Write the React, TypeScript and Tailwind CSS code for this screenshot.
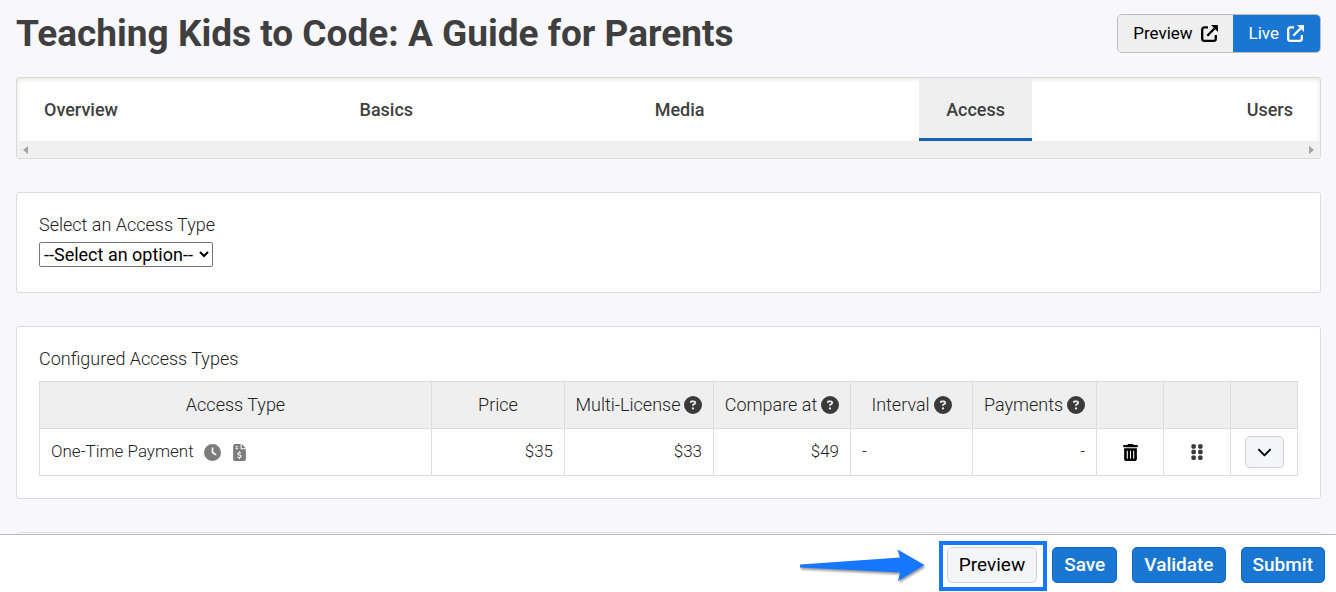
import type { ReactNode } from 'react';
import {
  FaChevronDown,
  FaCircleQuestion,
  FaClock,
  FaFileInvoiceDollar,
  FaGripVertical,
  FaTrashCan,
} from 'react-icons/fa6';

const tabs = ['Overview', 'Basics', 'Media', 'Access', 'Users'];

interface Column {
  label: string;
  width: string;
  help?: boolean;
}

const columns: Column[] = [
  { label: 'Access Type', width: '' },
  { label: 'Price', width: 'w-[133px]' },
  { label: 'Multi-License', width: 'w-[149px]', help: true },
  { label: 'Compare at', width: 'w-[137px]', help: true },
  { label: 'Interval', width: 'w-[122px]', help: true },
  { label: 'Payments', width: 'w-[124px]', help: true },
  { label: '', width: 'w-[67px]' },
  { label: '', width: 'w-[67px]' },
  { label: '', width: 'w-[67px]' },
];

function ExternalIcon() {
  return (
    <svg className="size-[17px]" viewBox="0 0 17 17" fill="none" stroke="currentColor" strokeWidth={2.3}>
      <path d="M7 2.4H3.2a2 2 0 0 0-2 2v9.400a2 2 0 0 0 2 2h9.600a2 2 0 0 0 2-2V10" />
      <path d="M6.300 10.700 13.500 3.500" />
      <path d="M10 0h6.300q.7 0 .7.7V7z" fill="currentColor" stroke="none" />
    </svg>
  );
}

function Card({ children }: { children?: ReactNode }) {
  return (
    <section className="mt-[33px] rounded-[3px] border border-[#dcdcdc] bg-white px-[22px] pt-[21px]">
      {children}
    </section>
  );
}

function TabBar() {
  return (
    <nav className="mt-6 rounded-[3px] border border-[#d9d9d9] bg-white shadow-[inset_0_1px_5px_#e4e4da]">
      <div className="flex h-[63px] justify-between">
        {tabs.map((tab) => (
          <a
            key={tab}
            href={`#${tab.toLowerCase()}`}
            className={
              tab === 'Access'
                ? 'flex items-center border-b-3 border-[#1565c0] bg-[#efefef] px-[27px] pt-[3px] text-lg font-medium'
                : 'flex items-center px-[27px] text-lg font-medium'
            }
          >
            {tab}
          </a>
        ))}
      </div>
      <div className="flex h-[17px] items-center justify-between bg-[#f0f0f0] px-1.5 text-[#a3a3a3]">
        <svg className="h-2 w-[5px]" viewBox="0 0 5 8" fill="currentColor">
          <path d="M5 0v8L0 4z" />
        </svg>
        <svg className="h-2 w-[5px]" viewBox="0 0 5 8" fill="currentColor">
          <path d="M0 0v8l5-4z" />
        </svg>
      </div>
    </nav>
  );
}

function AccessTable() {
  return (
    <table className="mt-[11px] mb-[22px] w-full table-fixed border-collapse">
      <thead>
        <tr className="h-[47px] bg-[#efefef]">
          {columns.map((col, i) => (
            <th key={i} className={`${col.width} border border-[#dcdcdc] p-0 text-lg font-light text-[#222]`}>
              <span className="inline-flex items-center gap-1">
                {col.label}
                {col.help && <FaCircleQuestion className="size-[18px] text-[#3a3a3a]" />}
              </span>
            </th>
          ))}
        </tr>
      </thead>
      <tbody>
        <tr className="h-[47px] text-[17px] font-light text-[#222]">
          <td className="border border-[#dcdcdc] px-[11px]">
            <div className="flex items-center">
              One-Time Payment
              <FaClock className="ml-2.5 size-[17px] text-[#7c7c7c]" />
              <FaFileInvoiceDollar className="ml-2.5 size-[17px] text-[#7c7c7c]" />
            </div>
          </td>
          <td className="border border-[#dcdcdc] px-[11px] text-right">$35</td>
          <td className="border border-[#dcdcdc] px-[11px] text-right">$33</td>
          <td className="border border-[#dcdcdc] px-[11px] text-right">$49</td>
          <td className="border border-[#dcdcdc] px-[11px]">-</td>
          <td className="border border-[#dcdcdc] px-[11px] text-right">-</td>
          <td className="border border-[#dcdcdc] p-0">
            <button aria-label="Delete" className="mx-auto block text-black">
              <FaTrashCan className="size-[17px]" />
            </button>
          </td>
          <td className="border border-[#dcdcdc] p-0">
            <button aria-label="Reorder" className="mx-auto block text-[#3a3a3a]">
              <FaGripVertical className="size-[18px]" />
            </button>
          </td>
          <td className="border border-[#dcdcdc] p-0">
            <button
              aria-label="Expand"
              className="mx-auto flex h-8 w-[39px] items-center justify-center rounded-[5px] border border-[#cfd1d5] bg-[#f4f5f8] pb-0.5 text-black shadow-xs"
            >
              <FaChevronDown className="size-[15px]" />
            </button>
          </td>
        </tr>
      </tbody>
    </table>
  );
}

function Footer() {
  return (
    <footer className="flex h-[58px] shrink-0 items-center justify-end gap-[15px] border-t border-[#b8b8b8] bg-white pt-0.5 pr-[11px] text-[19px]">
      <div className="relative">
        <button className="h-9 rounded-[5px] border border-[#cfd1d5] bg-[#f4f5f8] px-[11px] pt-0.5 text-black">
          Preview
        </button>
        <div className="pointer-events-none absolute -top-1.5 -right-2.5 -bottom-2 -left-2 border-4 border-[#1777ff]" />
        <svg
          className="pointer-events-none absolute top-0 right-full mr-[22px] h-9 w-[126px] drop-shadow-[1px_2px_1px_rgba(0,0,0,0.4)]"
          viewBox="0 0 126 36"
          fill="#1777ff"
        >
          <path d="M1 17.500 101 10.500 98.500 2.500 125.500 18 99 34 101 25.500 1 20.500z" />
        </svg>
      </div>
      {['Save', 'Validate', 'Submit'].map((label) => (
        <button
          key={label}
          className="h-9 rounded-[5px] border border-[#1568c4] bg-[#1976d2] px-[11px] pt-0.5 font-medium text-white"
        >
          {label}
        </button>
      ))}
    </footer>
  );
}

export default function App() {
  return (
    <div className="flex h-screen flex-col bg-[#f8f8fc] font-['Roboto',sans-serif] text-[#3f3f3f]">
      <main className="min-h-0 flex-1 overflow-hidden pt-3.5 pr-[15px] pl-4">
        <header className="flex h-[39px] items-center justify-between">
          <h1 className="text-[37px] leading-[38px] font-bold">Teaching Kids to Code: A Guide for Parents</h1>
          <div className="flex h-[39px] overflow-hidden rounded-[5px] border border-[#bdbdbd] text-[17px]">
            <button className="flex items-center gap-2 bg-[#efefef] px-[15px] text-black">
              Preview
              <ExternalIcon />
            </button>
            <button className="flex items-center gap-2 bg-[#1976d2] px-4 text-white">
              Live
              <ExternalIcon />
            </button>
          </div>
        </header>

        <TabBar />

        <Card>
          <label htmlFor="access-type" className="block text-lg leading-[22px] font-light text-[#222]">
            Select an Access Type
          </label>
          <select
            id="access-type"
            className="mt-1.5 mb-[25px] block h-[25px] w-[174px] rounded-[2px] border border-[#767676] bg-white text-lg leading-5 text-black"
          >
            <option>--Select an option--</option>
          </select>
        </Card>

        <Card>
          <h2 className="text-lg leading-[22px] font-light text-[#222]">Configured Access Types</h2>
          <AccessTable />
        </Card>

        <Card />
      </main>
      <Footer />
    </div>
  );
}
